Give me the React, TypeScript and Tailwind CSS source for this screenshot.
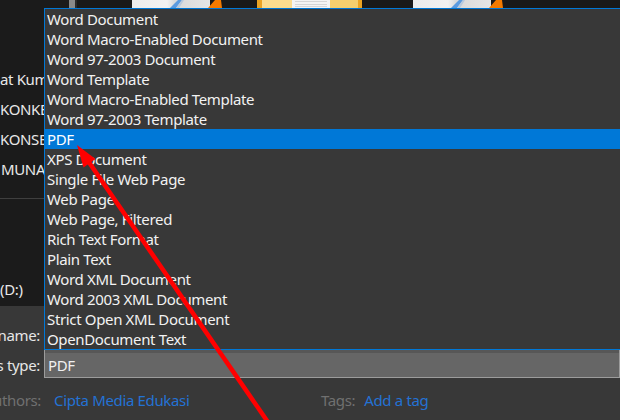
import React from "react";

const items = [
  "Word Document",
  "Word Macro-Enabled Document",
  "Word 97-2003 Document",
  "Word Template",
  "Word Macro-Enabled Template",
  "Word 97-2003 Template",
  "PDF",
  "XPS Document",
  "Single File Web Page",
  "Web Page",
  "Web Page, Filtered",
  "Rich Text Format",
  "Plain Text",
  "Word XML Document",
  "Word 2003 XML Document",
  "Strict Open XML Document",
  "OpenDocument Text",
];

function DocThumb() {
  return (
    <svg width="90" height="8" viewBox="0 0 90 8" className="block">
      <defs>
        <linearGradient id="dg" x1="0" x2="1" y1="0" y2="0">
          <stop offset="0" stopColor="#ececec" />
          <stop offset="0.45" stopColor="#f2f2f2" />
          <stop offset="0.55" stopColor="#d9d9d9" />
          <stop offset="1" stopColor="#e6e6e6" />
        </linearGradient>
      </defs>
      <rect x="0" y="0" width="78" height="8" fill="url(#dg)" />
      <polygon points="38,8 44,8 50,0 46,0" fill="#5b9be0" />
      <polygon points="44,8 47,8 52,0 50,0" fill="#b7c9de" />
      <polygon points="76,8 90,8 89,0 83,0" fill="#f47a00" />
    </svg>
  );
}

function FolderThumb() {
  return (
    <div className="flex h-[8px] w-[105px]">
      <div className="w-[5px] bg-[#eaa323]" />
      <div className="w-[30px] bg-[#fbdc8e]" />
      <div className="flex w-[38px] flex-col justify-between bg-[#f4f4f4] py-[1px]">
        <div className="mx-[3px] h-px bg-[#d6d6d6]" />
        <div className="mx-[3px] h-px bg-[#d6d6d6]" />
        <div className="mx-[3px] h-px bg-[#d6d6d6]" />
      </div>
      <div className="w-[28px] bg-[#f4cf6e]" />
      <div className="w-[4px] bg-[#eba423]" />
    </div>
  );
}

function Arrow() {
  return (
    <svg
      className="pointer-events-none absolute left-0 top-0"
      width="620"
      height="420"
      viewBox="0 0 620 420"
    >
      <line x1="86" y1="158" x2="272" y2="428" stroke="#ff0000" strokeWidth="4.5" />
      <polygon points="77,145 95.5,159 83.5,167.5" fill="#ff0000" />
    </svg>
  );
}

export default function App() {
  return (
    <div
      className="relative h-[420px] w-[620px] overflow-hidden bg-[#383838] text-[15px] leading-[20px] tracking-[-0.35px] text-[#f0f0f0]"
      style={{ fontFamily: '"Noto Sans", "Open Sans", sans-serif' }}
    >
      {/* top: navigation + file list */}
      <div className="flex h-[306px] bg-[#191919]">
        <div className="flex w-[77px] bg-[#1b1b1b]">
          <div className="flex w-[69px] flex-col pt-[64px] text-[#e8e8e8]">
            <div className="flex h-[30px] w-[44px] items-center overflow-hidden whitespace-nowrap">
              <span className="shrink-0">at Kum</span>
            </div>
            <div className="flex h-[30px] w-[44px] items-center overflow-hidden whitespace-nowrap">
              <span className="shrink-0">KONKE</span>
            </div>
            <div className="flex h-[30px] w-[44px] items-center overflow-hidden whitespace-nowrap">
              <span className="shrink-0">KONSE</span>
            </div>
            <div className="flex h-[30px] w-[44px] items-center overflow-hidden whitespace-nowrap pl-[1px]">
              <span className="shrink-0">MUNA</span>
            </div>
            <div className="mt-[14px] h-px w-[44px] bg-[#3f3f3f]" />
            <div className="mt-[75px] flex h-[30px] w-[44px] items-center overflow-hidden whitespace-nowrap">
              <span className="shrink-0">(D:)</span>
            </div>
          </div>
          <div className="flex w-[8px] bg-[#141414]">
            <div className="h-[8px] w-[6px] bg-[#8a8a8a]" />
            <div className="h-[8px] w-[2px] bg-[#2b2b2b]" />
          </div>
        </div>
        <div className="flex h-[8px] flex-1 bg-[#191919]">
          <div className="ml-[55px]">
            <DocThumb />
          </div>
          <div className="ml-[35px]">
            <FolderThumb />
          </div>
          <div className="ml-[51px]">
            <DocThumb />
          </div>
        </div>
      </div>

      {/* bottom: form fields */}
      <div className="flex flex-col pt-[14px]">
        <div className="flex h-[29px] items-center">
          <div className="flex w-[40px] justify-end overflow-hidden whitespace-nowrap text-[#e6e6e6]">
            <span className="shrink-0">name:</span>
          </div>
          <div className="ml-[4px] h-[26px] flex-1 bg-[#2b2b2b]" />
        </div>
        <div className="flex h-[29px] items-center">
          <div className="flex w-[40px] justify-end overflow-hidden whitespace-nowrap pt-[2px] text-[#e6e6e6]">
            <span className="shrink-0">s type:</span>
          </div>
          <div className="ml-[4px] flex h-[29px] flex-1 items-center border border-[#9c9c9c] bg-[#666666] pl-[3px] shadow-[inset_0_3px_0_#575757]">
            <span className="pt-[2px]">PDF</span>
          </div>
        </div>
        <div className="mt-[12px] flex h-[20px] items-center">
          <div className="flex w-[321px] items-center">
            <div className="flex w-[41px] justify-end overflow-hidden whitespace-nowrap text-[#707070]">
              <span className="shrink-0">uthors:</span>
            </div>
            <span className="ml-[13px] text-[#2472d4]">Cipta Media Edukasi</span>
          </div>
          <span className="text-[#707070]">Tags:</span>
          <span className="ml-[9px] text-[#2472d4]">Add a tag</span>
        </div>
      </div>

      {/* open dropdown list */}
      <div className="absolute left-[44px] right-[-4px] top-[8px] border border-[#0078d7] bg-[#383838]">
        {items.map((it) => (
          <div
            key={it}
            className={
              it === "PDF"
                ? "flex h-[20px] items-center whitespace-nowrap bg-[#0078d7] pl-[2px] text-white"
                : "flex h-[20px] items-center whitespace-nowrap pl-[2px] text-[#f2f2f2]"
            }
          >
            {it}
          </div>
        ))}
      </div>

      <Arrow />
    </div>
  );
}
